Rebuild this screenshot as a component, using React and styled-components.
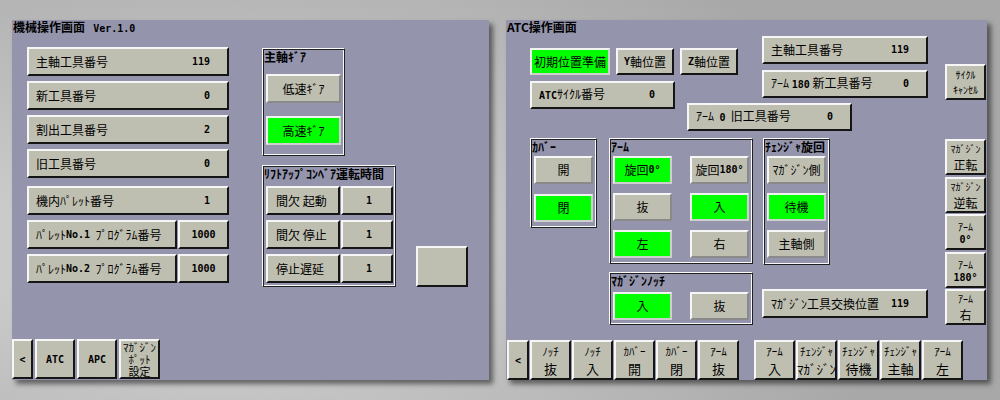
import React from "react";
import styled, { createGlobalStyle } from "styled-components";

const GlobalStyle = createGlobalStyle`
  html, body {
    margin: 0;
    padding: 0;
  }
  body {
    width: 1000px;
    height: 400px;
    overflow: hidden;
    background: radial-gradient(ellipse 70% 90% at 22% 62%, #dedede 0%, #c2c2c2 45%, #a8a8a8 100%);
    font-family: "Noto Sans CJK JP", "Liberation Sans", sans-serif;
    color: #000;
  }
`;

const Screen = styled.div`
  display: flex;
  gap: 17px;
  padding: 20px 0 0 12px;
  box-sizing: border-box;
  width: 1000px;
  height: 400px;
`;

const Panel = styled.div`
  width: ${(p) => p.$w}px;
  height: 360px;
  background: #9494ac;
  box-shadow: 4px 4px 5px rgba(0, 0, 0, 0.5);
  display: flex;
  flex-direction: column;
  flex-shrink: 0;
`;

const Title = styled.div`
  height: 14px;
  line-height: 14px;
  font-size: 12px;
  font-weight: 700;
  padding-left: 1px;
  white-space: pre;
`;

const Num = styled.span`
  font-family: "DejaVu Sans Mono", "Liberation Mono", monospace;
  font-weight: 700;
  font-size: 10px;
`;

const Btn = styled.div`
  box-sizing: border-box;
  flex-shrink: 0;
  display: flex;
  align-items: center;
  justify-content: ${(p) => p.$justify || "center"};
  width: ${(p) => p.$w}px;
  height: ${(p) => p.$h || 28}px;
  padding: ${(p) => p.$pad || "0"};
  margin-top: ${(p) => p.$mt || 0}px;
  margin-left: ${(p) => p.$ml || 0}px;
  background: ${(p) => (p.$on ? "#00ff00" : "#bfbfb1")};
  border: 2px solid;
  border-color: ${(p) =>
    p.$on
      ? "#f2f2f2 #cfcfcf #cfcfcf #f2f2f2"
      : p.$soft
      ? "#f6f6f6 #8a8a8a #8a8a8a #f6f6f6"
      : "#f6f6f6 #151515 #151515 #f6f6f6"};
  font-size: 12px;
  line-height: 14px;
  white-space: pre;
`;

const NavBtn = styled(Btn)`
  flex-direction: column;
  height: ${(p) => p.$h || 40}px;
  text-align: center;
  line-height: normal;

  & > span {
    font-size: ${(p) => (p.$small ? 10 : 11)}px;
    line-height: normal;
  }

  & > span.tight {
    line-height: 12px;
  }

  & > b {
    font-weight: 400;
    font-size: ${(p) => (p.$small ? 12 : 13)}px;
    line-height: normal;
  }

  & > ${Num} {
    font-size: 10px;
  }
`;

const Group = styled.div`
  box-sizing: border-box;
  flex-shrink: 0;
  width: ${(p) => p.$w}px;
  height: ${(p) => p.$h}px;
  margin-top: ${(p) => p.$mt || 0}px;
  margin-left: ${(p) => p.$ml || 0}px;
  border-style: solid;
  border-width: 1px;
  border-color: #fafafa #202020 #202020 #fafafa;
  box-shadow: inset 1px 1px 0 #202020, inset -1px -1px 0 #fafafa;
  display: flex;
  flex-direction: column;
`;

const GroupTitle = styled.div`
  height: ${(p) => p.$h || 17}px;
  line-height: 16px;
  font-size: 12px;
  font-weight: 700;
  padding-left: 1px;
  white-space: pre;
`;

const GroupStack = styled.div`
  display: flex;
  flex-direction: column;
  gap: ${(p) => p.$gap || 10}px;
  padding-left: 3px;
`;

const GroupGrid = styled.div`
  display: grid;
  grid-template-columns: 59px 59px;
  column-gap: 18px;
  row-gap: ${(p) => p.$gap || 10}px;
  padding-left: 3px;
`;

const Pair = styled.div`
  display: flex;
  gap: 1px;
`;

/* ---------- left panel ---------- */

const LeftBody = styled.div`
  display: flex;
  align-items: flex-start;
  padding: 13px 0 0 15px;
`;

const ColA = styled.div`
  display: flex;
  flex-direction: column;
  gap: 5px;
  width: 202px;
`;

const ColB = styled.div`
  display: flex;
  flex-direction: column;
  margin-left: 33px;
`;

const BottomRow = styled.div`
  display: flex;
  align-items: flex-end;
  margin-top: 9px;
`;

const NavBar = styled.div`
  display: flex;
  align-items: flex-end;
  gap: 15px;
  margin-top: auto;
  margin-left: ${(p) => p.$ml || 0}px;
  padding-bottom: ${(p) => p.$pb || 0}px;
`;

const NavGroup = styled.div`
  display: flex;
  gap: ${(p) => p.$gap || 1}px;
`;

/* ---------- right panel ---------- */

const RightBody = styled.div`
  display: flex;
  align-items: flex-start;
  padding: 2px 0 0 24px;
`;

const Main = styled.div`
  display: flex;
  flex-direction: column;
  width: 398px;
`;

const TopRow = styled.div`
  display: flex;
  align-items: flex-start;
`;

const Col = styled.div`
  display: flex;
  flex-direction: column;
  gap: ${(p) => p.$gap || 6}px;
  margin-top: ${(p) => p.$mt || 0}px;
  margin-left: ${(p) => p.$ml || 0}px;
  width: ${(p) => (p.$w ? p.$w + "px" : "auto")};
`;

const Row = styled.div`
  display: flex;
  gap: 6px;
`;

const MidRow = styled.div`
  display: flex;
  align-items: flex-start;
  margin-top: 7px;
`;

const Side = styled.div`
  display: flex;
  flex-direction: column;
  gap: 1.5px;
  margin-left: 17px;
  width: 41px;
`;

const ValueBtn = ({ label, value, w, h = 29, pr = 17, pl = 7, mt, ml }) => (
  <Btn $w={w} $h={h} $justify="space-between" $pad={`0 ${pr}px 0 ${pl}px`} $mt={mt} $ml={ml}>
    <span>{label}</span>
    <Num>{value}</Num>
  </Btn>
);

const sideKeys = [
  ["ﾏｶﾞｼﾞﾝ", "正転"],
  ["ﾏｶﾞｼﾞﾝ", "逆転"],
  ["ｱｰﾑ", "0°", true],
  ["ｱｰﾑ", "180°", true],
  ["ｱｰﾑ", "右"],
];

export default function App() {
  return (
    <>
      <GlobalStyle />
      <Screen>
        <Panel $w={477}>
          <Title>
            機械操作画面   <Num>Ver.1.0</Num>
          </Title>
          <LeftBody>
            <ColA>
              <ValueBtn w={202} label="主軸工具番号" value="119" />
              <ValueBtn w={202} label="新工具番号" value="0" />
              <ValueBtn w={202} label="割出工具番号" value="2" />
              <ValueBtn w={202} label="旧工具番号" value="0" />
              <ValueBtn w={202} label="機内ﾊﾟﾚｯﾄ番号" value="1" mt={3} />
              <Pair>
                <Btn $w={150} $h={29} $justify="flex-start" $pad="0 0 0 7px">
                  ﾊﾟﾚｯﾄ<Num>No.1</Num>  ﾌﾟﾛｸﾞﾗﾑ番号
                </Btn>
                <Btn $w={51} $h={29}>
                  <Num>1000</Num>
                </Btn>
              </Pair>
              <Pair>
                <Btn $w={150} $h={29} $justify="flex-start" $pad="0 0 0 7px">
                  ﾊﾟﾚｯﾄ<Num>No.2</Num>  ﾌﾟﾛｸﾞﾗﾑ番号
                </Btn>
                <Btn $w={51} $h={29}>
                  <Num>1000</Num>
                </Btn>
              </Pair>
            </ColA>
            <ColB>
              <Group $w={83} $h={108} $mt={1}>
                <GroupTitle $h={25}>主軸ｷﾞｱ</GroupTitle>
                <GroupStack $gap={13}>
                  <Btn $w={75} $h={29} $soft>低速ｷﾞｱ</Btn>
                  <Btn $w={75} $h={29} $on>高速ｷﾞｱ</Btn>
                </GroupStack>
              </Group>
              <BottomRow>
                <Group $w={134} $h={122}>
                  <GroupTitle $h={20}>ﾘﾌﾄｱｯﾌﾟｺﾝﾍﾞｱ運転時間</GroupTitle>
                  <GroupStack $gap={5}>
                    {["間欠 起動", "間欠 停止", "停止遅延"].map((t) => (
                      <Pair key={t}>
                        <Btn $w={74} $h={29} $justify="flex-start" $pad="0 0 0 8px">
                          {t}
                        </Btn>
                        <Btn $w={52} $h={29} $justify="flex-end" $pad="0 19px 0 0">
                          <Num>1</Num>
                        </Btn>
                      </Pair>
                    ))}
                  </GroupStack>
                </Group>
                <Btn $w={52} $h={41} $ml={20} />
              </BottomRow>
            </ColB>
          </LeftBody>
          <NavBar $pb={1}>
            <NavGroup $gap={2}>
              <NavBtn $w={21}>
                <Num>&lt;</Num>
              </NavBtn>
              <NavBtn $w={40}>
                <Num>ATC</Num>
              </NavBtn>
              <NavBtn $w={40}>
                <Num>APC</Num>
              </NavBtn>
              <NavBtn $w={41}>
                <span className="tight">ﾏｶﾞｼﾞﾝ</span>
                <span className="tight">ﾎﾟｯﾄ</span>
                <span className="tight">設定</span>
              </NavBtn>
            </NavGroup>
          </NavBar>
        </Panel>

        <Panel $w={481}>
          <Title>ATC操作画面</Title>
          <RightBody>
            <Main>
              <TopRow>
                <Col $mt={12} $w={208}>
                  <Row>
                    <Btn $w={80} $h={27} $on>初期位置準備</Btn>
                    <Btn $w={58} $h={27}>
                      <Num>Y</Num>軸位置
                    </Btn>
                    <Btn $w={58} $h={27}>
                      <Num>Z</Num>軸位置
                    </Btn>
                  </Row>
                  <ValueBtn w={145} h={28} label={<><Num>ATC</Num>ｻｲｸﾙ番号</>} value="0" pr={18} />
                </Col>
                <Col $ml={24} $w={166}>
                  <ValueBtn w={166} h={28} label="主軸工具番号" value="119" />
                  <ValueBtn
                    w={166}
                    h={28}
                    label={<>ｱｰﾑ <Num>180</Num> 新工具番号</>}
                    value="0"
                  />
                </Col>
              </TopRow>
              <ValueBtn
                w={165}
                h={28}
                mt={-6}
                ml={157}
                label={<>ｱｰﾑ  <Num>0</Num>  旧工具番号</>}
                value="0"
              />
              <MidRow>
                <Group $w={67} $h={90}>
                  <GroupTitle>ｶﾊﾞｰ</GroupTitle>
                  <GroupStack $gap={10}>
                    <Btn $w={59} $soft>開</Btn>
                    <Btn $w={59} $on>閉</Btn>
                  </GroupStack>
                </Group>
                <Col $ml={12} $gap={8}>
                  <Group $w={144} $h={126}>
                    <GroupTitle>ｱｰﾑ</GroupTitle>
                    <GroupGrid $gap={9}>
                      <Btn $w={59} $on>
                        旋回<Num>0°</Num>
                      </Btn>
                      <Btn $w={59} $soft>
                        旋回<Num>180°</Num>
                      </Btn>
                      <Btn $w={59} $soft>抜</Btn>
                      <Btn $w={59} $on>入</Btn>
                      <Btn $w={59} $on>左</Btn>
                      <Btn $w={59} $soft>右</Btn>
                    </GroupGrid>
                  </Group>
                  <Group $w={144} $h={53}>
                    <GroupTitle $h={19}>ﾏｶﾞｼﾞﾝﾉｯﾁ</GroupTitle>
                    <GroupGrid>
                      <Btn $w={59} $on>入</Btn>
                      <Btn $w={59} $soft>抜</Btn>
                    </GroupGrid>
                  </Group>
                </Col>
                <Col $ml={9} $gap={24}>
                  <Group $w={67} $h={127} $ml={1}>
                    <GroupTitle>ﾁｪﾝｼﾞｬ旋回</GroupTitle>
                    <GroupStack $gap={9}>
                      <Btn $w={59} $soft>ﾏｶﾞｼﾞﾝ側</Btn>
                      <Btn $w={59} $on>待機</Btn>
                      <Btn $w={59} $soft>主軸側</Btn>
                    </GroupStack>
                  </Group>
                  <ValueBtn w={166} h={29} label="ﾏｶﾞｼﾞﾝ工具交換位置" value="119" />
                </Col>
              </MidRow>
            </Main>
            <Side>
              <NavBtn $w={41} $h={36} $mt={28} $small>
                <span>ｻｲｸﾙ</span>
                <span>ｷｬﾝｾﾙ</span>
              </NavBtn>
              {sideKeys.map(([a, b, num], i) => (
                <NavBtn key={i} $w={41} $h={36} $mt={i === 0 ? 37.5 : 0} $small>
                  <span>{a}</span>
                  {num ? <Num>{b}</Num> : <b>{b}</b>}
                </NavBtn>
              ))}
            </Side>
          </RightBody>
          <NavBar $ml={1}>
            <NavGroup>
              <NavBtn $w={22}>
                <Num>&lt;</Num>
              </NavBtn>
              {[
                ["ﾉｯﾁ", "抜"],
                ["ﾉｯﾁ", "入"],
                ["ｶﾊﾞｰ", "開"],
                ["ｶﾊﾞｰ", "閉"],
                ["ｱｰﾑ", "抜"],
              ].map(([a, b], i) => (
                <NavBtn key={i} $w={41}>
                  <span>{a}</span>
                  <b>{b}</b>
                </NavBtn>
              ))}
            </NavGroup>
            <NavGroup>
              {[
                ["ｱｰﾑ", "入"],
                ["ﾁｪﾝｼﾞｬ", "ﾏｶﾞｼﾞﾝ"],
                ["ﾁｪﾝｼﾞｬ", "待機"],
                ["ﾁｪﾝｼﾞｬ", "主軸"],
                ["ｱｰﾑ", "左"],
              ].map(([a, b], i) => (
                <NavBtn key={i} $w={41}>
                  <span>{a}</span>
                  <b>{b}</b>
                </NavBtn>
              ))}
            </NavGroup>
          </NavBar>
        </Panel>
      </Screen>
    </>
  );
}
